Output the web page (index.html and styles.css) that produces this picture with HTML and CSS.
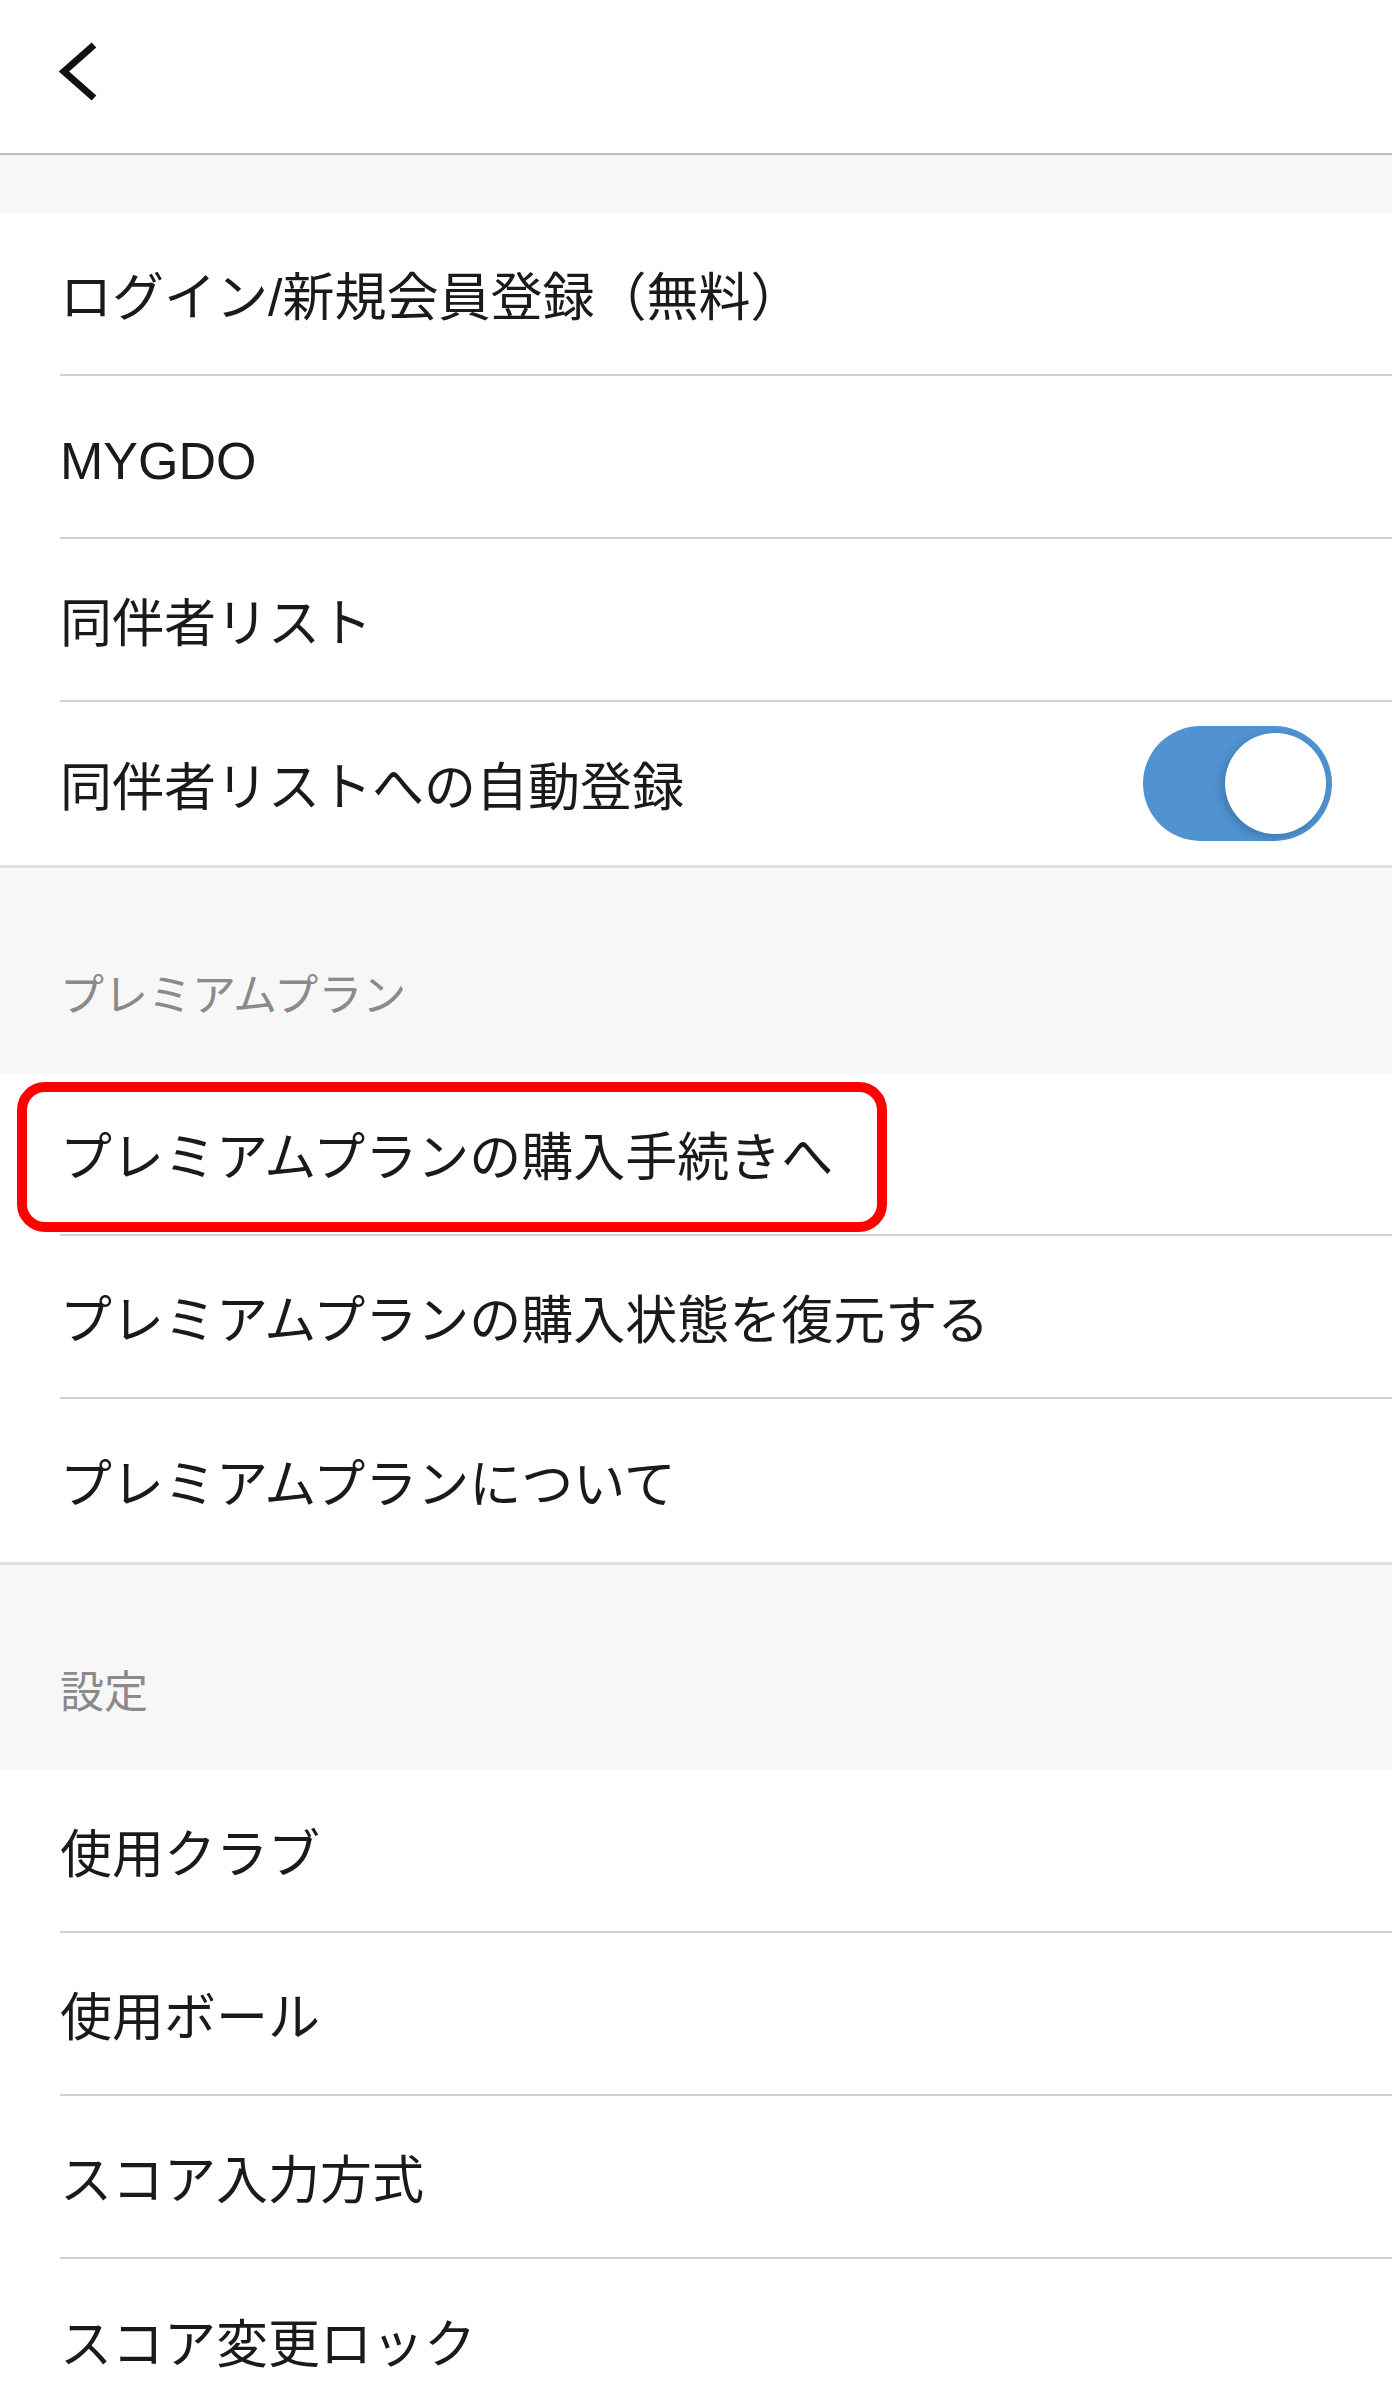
FILE: index.html
```html
<!DOCTYPE html>
<html lang="ja">
<head>
<meta charset="utf-8">
<title>設定</title>
<link rel="stylesheet" href="styles.css">
</head>
<body>
<div class="page">
  <header class="topbar">
    <button class="back" aria-label="戻る">
      <svg class="back-icon" width="44" height="68" viewBox="0 0 44 68">
        <polyline points="36,7 6,33.5 36,60" fill="none" stroke="#111" stroke-width="7" stroke-linejoin="miter" />
      </svg>
    </button>
  </header>
  <div class="spacer"></div>

  <section class="group">
    <div class="row"><span class="label">ログイン/新規会員登録（無料）</span></div>
    <div class="row"><span class="label">MYGDO</span></div>
    <div class="row"><span class="label">同伴者リスト</span></div>
    <div class="row">
      <span class="label">同伴者リストへの自動登録</span>
      <span class="toggle on"><span class="knob"></span></span>
    </div>
  </section>

  <div class="section-head"><span>プレミアムプラン</span></div>

  <section class="group">
    <div class="row highlighted"><span class="label">プレミアムプランの購入手続きへ</span><span class="mark"></span></div>
    <div class="row"><span class="label">プレミアムプランの購入状態を復元する</span></div>
    <div class="row"><span class="label">プレミアムプランについて</span></div>
  </section>

  <div class="section-head"><span>設定</span></div>

  <section class="group last">
    <div class="row"><span class="label">使用クラブ</span></div>
    <div class="row"><span class="label">使用ボール</span></div>
    <div class="row"><span class="label">スコア入力方式</span></div>
    <div class="row"><span class="label">スコア変更ロック</span></div>
  </section>
</div>
</body>
</html>
```
FILE: styles.css
```css
html, body {
  margin: 0;
  padding: 0;
  background: #ffffff;
}

body {
  font-family: "Liberation Sans", "Noto Sans CJK JP", sans-serif;
  color: #1a1a1a;
}

.page {
  width: 1392px;
  display: flex;
  flex-direction: column;
}

.topbar {
  height: 153px;
  border-bottom: 2px solid #bdbdbd;
  display: flex;
  align-items: flex-start;
  box-sizing: content-box;
}

.back {
  margin: 38px 0 0 58px;
  padding: 0;
  border: 0;
  background: none;
  display: flex;
}

.back-icon {
  display: block;
}

.spacer {
  height: 58px;
  background: #f7f7f7;
}

.group {
  background: #ffffff;
  border-bottom: 3px solid #e0e0e0;
}

.group.last {
  border-bottom: 0;
}

.row {
  position: relative;
  margin-left: 60px;
  padding-right: 60px;
  height: 161px;
  border-bottom: 2px solid #d2d2d2;
  display: flex;
  align-items: center;
  justify-content: space-between;
}

.row:last-child {
  height: 163px;
  border-bottom: 0;
}

.label {
  font-size: 52px;
  line-height: 1;
  padding-top: 8px;
  letter-spacing: 0;
  white-space: nowrap;
}

.section-head {
  height: 205px;
  background: #f7f7f7;
  display: flex;
  align-items: flex-end;
  padding-left: 60px;
  box-sizing: border-box;
  padding-bottom: 55px;
}

.section-head span {
  font-size: 44px;
  line-height: 1;
  color: #8a8a8a;
}

.toggle {
  width: 189px;
  height: 115px;
  border-radius: 58px;
  background: #5093d0;
  display: flex;
  align-items: center;
  justify-content: flex-end;
  padding-right: 6px;
  box-sizing: border-box;
}

.knob {
  width: 101px;
  height: 101px;
  border-radius: 50%;
  background: #ffffff;
  box-shadow: -3px 3px 8px rgba(20, 50, 90, 0.28);
}

.mark {
  position: absolute;
  left: -43px;
  top: 9px;
  width: 870px;
  height: 150px;
  border: 10px solid #ff0000;
  border-radius: 28px;
  box-sizing: border-box;
  pointer-events: none;
}
```
